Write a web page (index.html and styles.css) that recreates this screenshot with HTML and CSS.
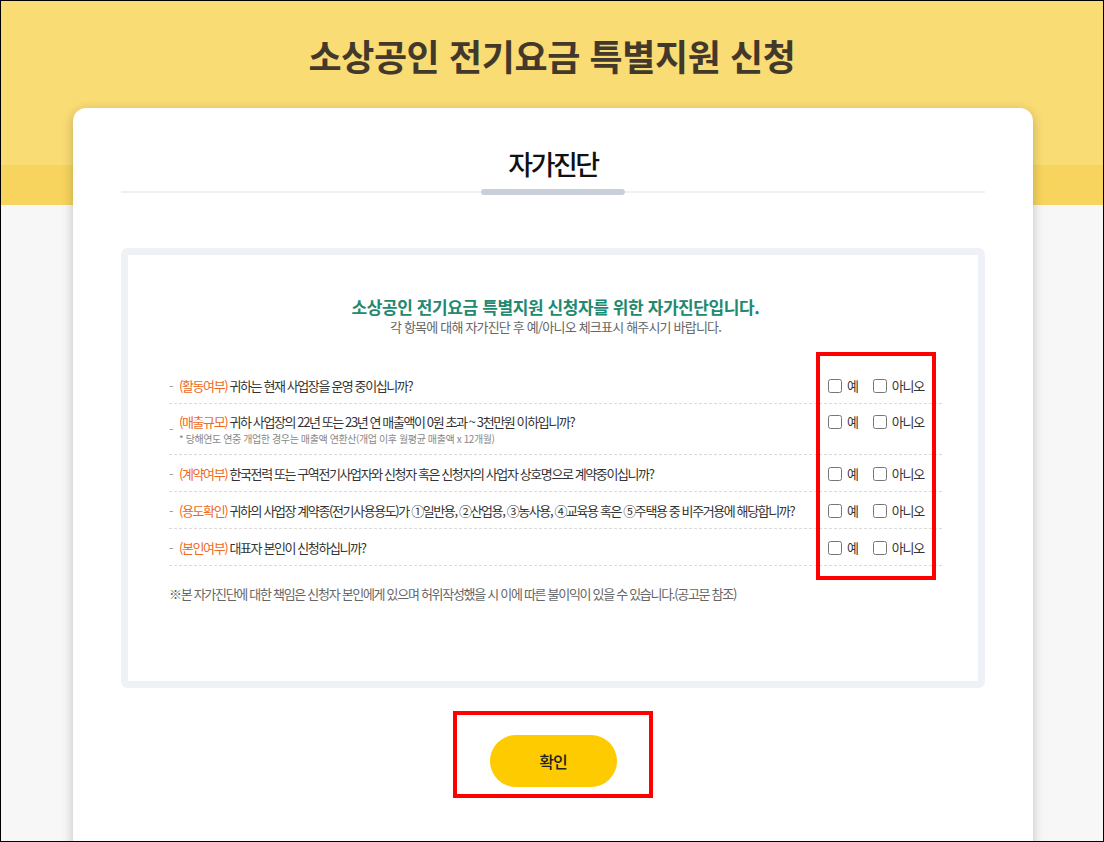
FILE: index.html
```html
<!DOCTYPE html>
<html lang="ko">

<head>
    <meta charset="UTF-8" />
    <meta name="viewport" content="width=device-width, initial-scale=1.0" />
    <title>소상공인 전기요금 특별지원 신청</title>
    <link rel="stylesheet" href="styles.css">
</head>

<body>
    <div class="frame">
        <h1 class="page-title">소상공인 전기요금 특별지원 신청</h1>

        <div class="card">
            <h2 class="card-title">자가진단</h2>
            <div class="title-line"><div class="title-bar"></div></div>

            <div class="diag-box">
                <p class="diag-head">소상공인 전기요금 특별지원 신청자를 위한 자가진단입니다.</p>
                <p class="diag-sub">각 항목에 대해 자가진단 후 예/아니오 체크표시 해주시기 바랍니다.</p>

                <div class="q-list">
                    <div class="q-row">
                        <span class="q-dash">-</span>
                        <div class="q-text"><span class="q-tag">(활동여부)</span> 귀하는 현재 사업장을 운영 중이십니까?</div>
                        <div class="answers">
                            <label><input type="checkbox" /> 예</label>
                            <label><input type="checkbox" /> 아니오</label>
                        </div>
                    </div>
                    <div class="q-row two-line">
                        <span class="q-dash">-</span>
                        <div class="q-text">
                            <span class="q-tag">(매출규모)</span> 귀하 사업장의 22년 또는 23년 연 매출액이 0원 초과 ~ 3천만원 이하입니까?
                            <p class="q-note">* 당해연도 연중 개업한 경우는 매출액 연환산(개업 이후 월평균 매출액 x 12개월)</p>
                        </div>
                        <div class="answers">
                            <label><input type="checkbox" /> 예</label>
                            <label><input type="checkbox" /> 아니오</label>
                        </div>
                    </div>
                    <div class="q-row">
                        <span class="q-dash">-</span>
                        <div class="q-text"><span class="q-tag">(계약여부)</span> 한국전력 또는 구역전기사업자와 신청자 혹은 신청자의 사업자 상호명으로 계약중이십니까?</div>
                        <div class="answers">
                            <label><input type="checkbox" /> 예</label>
                            <label><input type="checkbox" /> 아니오</label>
                        </div>
                    </div>
                    <div class="q-row">
                        <span class="q-dash">-</span>
                        <div class="q-text"><span class="q-tag">(용도확인)</span> 귀하의 사업장 계약종(전기사용용도)가 ①일반용, ②산업용, ③농사용, ④교육용 혹은 ⑤주택용 중 비주거용에 해당합니까?</div>
                        <div class="answers">
                            <label><input type="checkbox" /> 예</label>
                            <label><input type="checkbox" /> 아니오</label>
                        </div>
                    </div>
                    <div class="q-row">
                        <span class="q-dash">-</span>
                        <div class="q-text"><span class="q-tag">(본인여부)</span> 대표자 본인이 신청하십니까?</div>
                        <div class="answers">
                            <label><input type="checkbox" /> 예</label>
                            <label><input type="checkbox" /> 아니오</label>
                        </div>
                    </div>

                    <!-- highlight around the answer column -->
                    <div class="mark-answers"></div>
                </div>

                <p class="diag-foot">※본 자가진단에 대한 책임은 신청자 본인에게 있으며 허위작성했을 시 이에 따른 불이익이 있을 수 있습니다.(공고문 참조)</p>
            </div>

            <div class="btn-mark">
                <button class="btn-ok">확인</button>
            </div>
        </div>
    </div>
</body>

</html>
```

FILE: styles.css
```css
* {
    box-sizing: border-box;
}

body {
    margin: 0;
    font-family: "Noto Sans CJK KR", "Noto Sans", sans-serif;
    color: #333;
}

.frame {
    width: 1104px;
    height: 842px;
    border: 1px solid #000;
    overflow: hidden;
    background: linear-gradient(#f9dc74 0, #f9dc74 164px, #f6d45e 164px, #f6d45e 204px, #f7f7f8 204px);
}

.page-title {
    margin: 0;
    padding-top: 29px;
    font-size: 36px;
    line-height: 50px;
    font-weight: 700;
    letter-spacing: -0.4px;
    text-align: center;
    color: #43392b;
}

.card {
    width: 960px;
    margin: 28px 0 0 72px;
    padding: 40px 48px 60px;
    background: white;
    border-radius: 13px;
    box-shadow: 0 3px 12px rgba(0, 0, 0, 0.22);
}

.card-title {
    margin: 0;
    font-size: 27px;
    line-height: 32px;
    font-weight: 500;
    letter-spacing: -2.5px;
    text-align: center;
    color: #111;
}

.title-line {
    height: 6px;
    margin-top: 9px;
    background: linear-gradient(#eef0f3, #eef0f3) center / 100% 2px no-repeat;
}

.title-bar {
    width: 144px;
    height: 6px;
    margin: 0 auto;
    border-radius: 3px;
    background: #c8cfd9;
}

.diag-box {
    margin-top: 53px;
    padding: 41px 36px 78px 41px;
    border: 7px solid #eef1f5;
    border-radius: 7px;
}

.diag-head {
    margin: 0;
    font-size: 17px;
    line-height: 22px;
    font-weight: 700;
    letter-spacing: -0.4px;
    text-align: center;
    color: #21896f;
}

.diag-sub {
    margin: 0;
    font-size: 13px;
    line-height: 18px;
    letter-spacing: -0.8px;
    text-align: center;
    color: #666;
}

.q-list {
    position: relative;
    margin-top: 31px;
}

.q-row {
    display: flex;
    align-items: flex-start;
    padding: 9px 0 7px;
    border-bottom: 1px dashed #dadada;
    font-size: 13px;
    line-height: 20px;
    letter-spacing: -1.4px;
}

.q-row.two-line {
    padding: 8px 0;
}

.q-dash {
    align-self: center;
    width: 10px;
    color: #999;
}

.q-text {
    flex: 1;
    color: #333;
}

.q-tag {
    color: #ee6a22;
}

.q-note {
    margin: 0;
    font-size: 10px;
    line-height: 14px;
    letter-spacing: -0.4px;
    color: #888;
}

.answers {
    display: flex;
    width: 114px;
    gap: 15px;
    font-size: 13px;
    letter-spacing: -1.2px;
    color: #333;
}

.answers label {
    display: flex;
    align-items: center;
    gap: 5px;
}

.answers input {
    width: 14px;
    height: 14px;
    margin: 0;
}

.mark-answers {
    position: absolute;
    left: 647px;
    top: -15px;
    width: 120px;
    height: 228px;
    border: 4px solid #ff0000;
}

.diag-foot {
    margin: 19px 0 0;
    font-size: 13px;
    line-height: 18px;
    letter-spacing: -1.3px;
    color: #666;
}

.btn-mark {
    width: 200px;
    height: 87px;
    margin: 23px auto 0;
    padding-top: 20px;
    border: 4px solid #ff0000;
    text-align: center;
}

.btn-ok {
    width: 127px;
    height: 52px;
    border: none;
    border-radius: 26px;
    background: #fdcb00;
    font-family: inherit;
    font-size: 16px;
    font-weight: 500;
    letter-spacing: -1px;
    color: #222;
    cursor: pointer;
}
```
